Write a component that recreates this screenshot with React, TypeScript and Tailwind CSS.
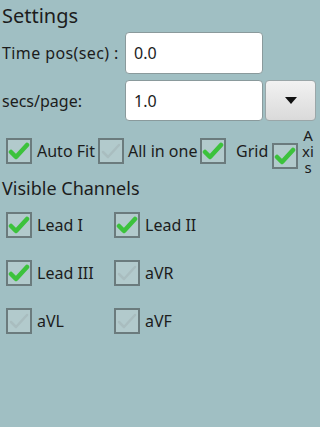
import React from "react";

function Check({ on }: { on: boolean }) {
  return (
    <div className="w-[26px] h-[26px] shrink-0 border-2 border-[#6b7b7d] bg-[#b2cacc] flex items-center justify-center">
      <svg width="22" height="22" viewBox="0 0 22 22">
        <path
          d="M3 12 L8 17 L19 5"
          fill="none"
          stroke={on ? "#3cc23c" : "#a9bdbf"}
          strokeWidth={on ? 4.5 : 2.5}
          strokeLinecap="round"
          strokeLinejoin="round"
        />
      </svg>
    </div>
  );
}

function Lead({ label, on }: { label: string; on: boolean }) {
  return (
    <div className="flex items-center gap-[5px]">
      <Check on={on} />
      <span className="text-[16px] whitespace-nowrap">{label}</span>
    </div>
  );
}

export default function App() {
  return (
    <div className="w-[320px] h-[427px] bg-[#a0bfc3] text-[#1c1c1c] font-['Noto_Sans',sans-serif] overflow-hidden">
      <div className="pl-[2px] pt-[3px] text-[20px] leading-[26px]">Settings</div>

      <div className="flex items-center mt-[3px] h-[42px]">
        <span className="w-[125px] shrink-0 pl-[2px] text-[16px] whitespace-nowrap tracking-[0.4px]">Time pos(sec) :</span>
        <div className="w-[138px] h-[42px] shrink-0 bg-white border border-[#8a9a9c] rounded-[4px] flex items-center pl-[8px] text-[16px]">
          0.0
        </div>
      </div>

      <div className="flex items-center mt-[6px] h-[41px]">
        <span className="w-[125px] shrink-0 pl-[2px] text-[16px] whitespace-nowrap">secs/page:</span>
        <div className="w-[138px] h-[41px] shrink-0 bg-white border border-[#8a9a9c] rounded-[4px] flex items-center pl-[8px] text-[16px]">
          1.0
        </div>
        <div className="ml-[2px] w-[51px] h-[41px] shrink-0 bg-gradient-to-b from-[#f2f2f2] to-[#dadada] border border-[#9aa6a8] rounded-[4px] flex items-center justify-center">
          <svg width="12" height="7" viewBox="0 0 12 7">
            <path d="M0 0 H12 L6 7 Z" fill="#111" />
          </svg>
        </div>
      </div>

      <div className="flex items-start mt-[6px] h-[50px] text-[16px] whitespace-nowrap">
        <div className="flex items-center mt-[11px] ml-[6px] shrink-0">
          <Check on={true} />
          <span className="ml-[5px] w-[61px]">Auto Fit</span>
        </div>
        <div className="flex items-center mt-[11px] shrink-0">
          <Check on={false} />
          <span className="ml-[4px] w-[72px]">All in one</span>
        </div>
        <div className="flex items-center mt-[11px] shrink-0">
          <Check on={true} />
          <span className="ml-[10px] w-[36px]">Grid</span>
        </div>
        <div className="mt-[16px] shrink-0">
          <Check on={true} />
        </div>
        <div className="ml-[4px] text-[15px] leading-[16px] text-center w-[12px] shrink-0 flex flex-col">
          <span>A</span>
          <span>xi</span>
          <span>s</span>
        </div>
      </div>

      <div className="pl-[2px] text-[18px] leading-[22px]">Visible Channels</div>

      <div className="grid grid-cols-[108px_1fr] gap-y-[22px] pl-[6px] mt-[13px]">
        <Lead label="Lead I" on={true} />
        <Lead label="Lead II" on={true} />
        <Lead label="Lead III" on={true} />
        <Lead label="aVR" on={false} />
        <Lead label="aVL" on={false} />
        <Lead label="aVF" on={false} />
      </div>
    </div>
  );
}
